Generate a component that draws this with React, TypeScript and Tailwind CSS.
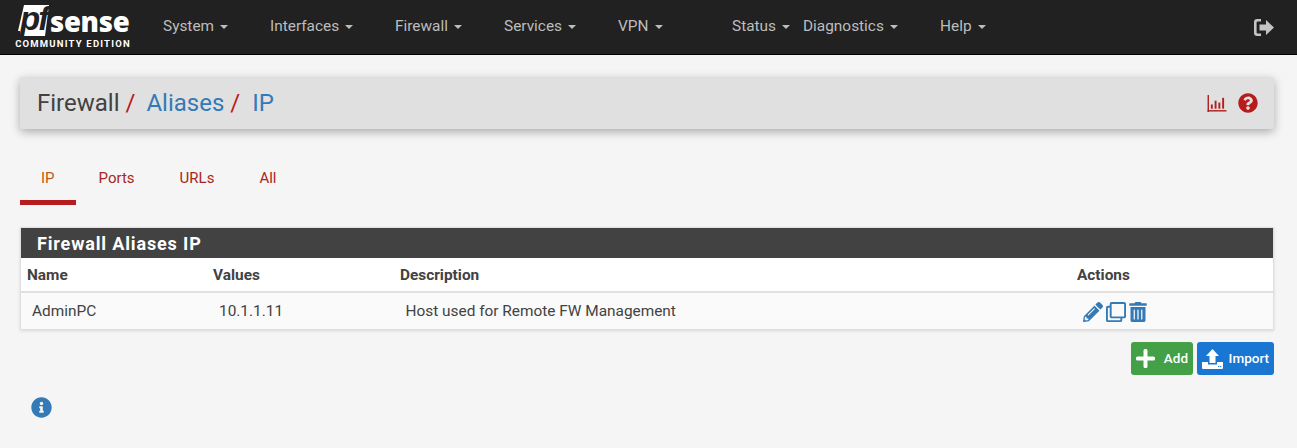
import React from 'react';
import { FaQuestionCircle, FaInfoCircle, FaPencilAlt, FaRegClone, FaTrashAlt } from 'react-icons/fa';

const navItems = [
    { label: 'System', width: 'w-[107px]' },
    { label: 'Interfaces', width: 'w-[125px]' },
    { label: 'Firewall', width: 'w-[109px]' },
    { label: 'Services', width: 'w-[114px]' },
    { label: 'VPN', width: 'w-[114px]' },
    { label: 'Status', width: 'w-[71px]' },
    { label: 'Diagnostics', width: 'w-[137px]' },
    { label: 'Help', width: 'w-[60px]' },
];

const tabs = ['IP', 'Ports', 'URLs', 'All'];

const Logo = () => (
    <div className="flex w-[118px] shrink-0 flex-col items-center">
        <div className="flex h-[31px] items-end self-start pl-[4px]">
            <div className="relative h-[31px] w-[31px]">
                <svg viewBox="0 0 31 31" className="h-full w-full">
                    <polygon points="6,0 31,0 27,31 2,31 2,26 0,26" fill="#fff" />
                </svg>
                <span className="absolute left-[2px] top-[-4px] font-['Liberation_Sans',sans-serif] text-[33px] font-bold italic leading-[36px] tracking-[-2px] text-[#212121]">pf</span>
            </div>
            <span className="ml-[1px] pt-[1px] font-['Open_Sans',sans-serif] text-[27.5px] font-extrabold leading-[29px] tracking-[-0.3px] text-white">sense</span>
        </div>
        <div className="mt-[2px] whitespace-nowrap font-['Roboto',sans-serif] text-[9.5px] font-bold leading-[11px] tracking-[1.2px] text-white">COMMUNITY EDITION</div>
    </div>
);

const LogoutIcon = () => (
    <svg viewBox="0 0 20 17" className="h-[17px] w-[20px]" fill="#c4c4c4">
        <path d="M7 0 V2.6 H3.6 Q2.6 2.6 2.6 3.6 V13.4 Q2.6 14.4 3.6 14.4 H7 V17 H3.2 Q0 17 0 13.8 V3.2 Q0 0 3.2 0 Z" />
        <path d="M12 1 L20 8.5 L12 16 V11.6 H5.5 V5.4 H12 Z" />
    </svg>
);

const StatsIcon = () => (
    <svg viewBox="0 0 20 18" className="h-[17px] w-[20px]" fill="#b71c1c">
        <rect x="0" y="0" width="1.5" height="18" />
        <rect x="0" y="16" width="20" height="1.5" />
        <rect x="3.5" y="10" width="2" height="4.5" />
        <rect x="7.5" y="6" width="2" height="8.5" />
        <rect x="11.5" y="8" width="2" height="6.5" />
        <rect x="15.5" y="3" width="2" height="11.5" />
    </svg>
);

const PlusIcon = () => (
    <svg viewBox="0 0 19 19" className="h-[19px] w-[19px]" fill="#fff">
        <path d="M7.5 1.5 Q7.5 0 9 0 H10 Q11.5 0 11.5 1.5 V7.5 H17.5 Q19 7.5 19 9 V10 Q19 11.5 17.5 11.5 H11.5 V17.5 Q11.5 19 10 19 H9 Q7.5 19 7.5 17.5 V11.5 H1.5 Q0 11.5 0 10 V9 Q0 7.5 1.5 7.5 H7.5 Z" />
    </svg>
);

const ImportIcon = () => (
    <svg viewBox="0 0 21 20" className="h-[20px] w-[21px]" fill="#fff">
        <path d="M10.5 0 L17 7 H13.5 V14 H7.5 V7 H4 Z" />
        <path d="M0 13 H6 V15.5 H15 V13 H21 V19 Q21 20 20 20 H1 Q0 20 0 19 Z" />
        <rect x="16" y="17" width="1.2" height="1" fill="#1976d2" />
        <rect x="18" y="17" width="1.2" height="1" fill="#1976d2" />
    </svg>
);

const App: React.FC = () => {
    return (
        <div className="h-[448px] w-[1297px] overflow-hidden bg-[#f5f5f5] font-['Roboto',sans-serif] text-[#424242]">
            {/* Top navigation */}
            <nav className="flex h-[55px] items-center border-b border-black bg-[#212121] pl-[14px] pr-[23px]">
                <Logo />
                <ul className="ml-[31px] flex items-center text-[15.4px] text-[#bdbdbd]">
                    {navItems.map(item => (
                        <li key={item.label} className={`flex items-center ${item.width}`}>
                            <span>{item.label}</span>
                            <span className="ml-[6px] h-0 w-0 border-x-[4px] border-t-[4px] border-x-transparent border-t-[#bdbdbd]" />
                        </li>
                    ))}
                </ul>
                <div className="ml-auto"><LogoutIcon /></div>
            </nav>

            <main className="pl-[20px] pr-[23px]">
                {/* Breadcrumb bar */}
                <div className="mt-[22px] flex h-[52px] items-center justify-between rounded-[2px] bg-[#e0e0e0] pl-[17px] pr-[16px] shadow-[0_3px_10px_rgba(0,0,0,0.3)]">
                    <div className="flex items-center text-[24px] leading-none">
                        <span className="text-[#424242]">Firewall</span>
                        <span className="ml-[6px] text-[#b71c1c]">/</span>
                        <span className="ml-[11px] text-[#337ab7]">Aliases</span>
                        <span className="ml-[6px] text-[#b71c1c]">/</span>
                        <span className="ml-[12px] text-[#337ab7]">IP</span>
                    </div>
                    <div className="flex items-center gap-[11px]">
                        <StatsIcon />
                        <FaQuestionCircle className="h-[20px] w-[20px] text-[#b71c1c]" />
                    </div>
                </div>

                {/* Tabs */}
                <ul className="mt-[27px] flex gap-[1px] text-[15px]">
                    {tabs.map((tab, i) => (
                        <li
                            key={tab}
                            className={`flex h-[49px] items-start pt-[14px] leading-[17px] ${i === 0 ? 'border-b-[5px] border-[#b71c1c] px-[21px] text-[#bf5a15]' : 'px-[22px] text-[#a8261d]'}`}
                        >
                            {tab}
                        </li>
                    ))}
                </ul>

                {/* Aliases panel */}
                <section className="mt-[22px] border border-[#e0e0e0] bg-[#fafafa] shadow-[0_1px_3px_rgba(0,0,0,0.12)]">
                    <h2 className="flex h-[30px] items-center bg-[#424242] pl-[16px] text-[18px] font-bold tracking-[0.85px] text-white">Firewall Aliases IP</h2>
                    <div className="flex h-[35px] items-center border-b-2 border-[#e0e0e0] bg-white pl-[6px] pt-[2px] text-[15.4px] font-bold">
                        <span className="w-[186px]">Name</span>
                        <span className="w-[187px]">Values</span>
                        <span className="w-[677px]">Description</span>
                        <span>Actions</span>
                    </div>
                    <div className="flex h-[36px] items-center pl-[11px] pt-[1px] text-[15.4px]">
                        <span className="w-[187px]">AdminPC</span>
                        <span className="w-[186.5px]">10.1.1.11</span>
                        <span className="w-[677.5px]">Host used for Remote FW Management</span>
                        <div className="flex items-center gap-[3px] text-[#337ab7]">
                            <FaPencilAlt className="h-[20px] w-[20px]" />
                            <FaRegClone className="h-[20px] w-[20px]" />
                            <FaTrashAlt className="h-[20px] w-[18px]" />
                        </div>
                    </div>
                </section>

                {/* Buttons */}
                <div className="mt-[12px] flex justify-end gap-[4px]">
                    <button className="flex h-[33px] w-[62px] items-center justify-between rounded-[3px] bg-[#43a047] pl-[5px] pr-[5px] text-[13.5px] font-medium text-white">
                        <PlusIcon />
                        <span>Add</span>
                    </button>
                    <button className="flex h-[33px] w-[77px] items-center justify-between rounded-[3px] bg-[#1976d2] pl-[5px] pr-[5px] text-[13.5px] font-medium text-white">
                        <ImportIcon />
                        <span>Import</span>
                    </button>
                </div>

                <FaInfoCircle className="ml-[11px] mt-[22px] h-[21px] w-[21px] text-[#337ab7]" />
            </main>
        </div>
    );
};

export default App;
